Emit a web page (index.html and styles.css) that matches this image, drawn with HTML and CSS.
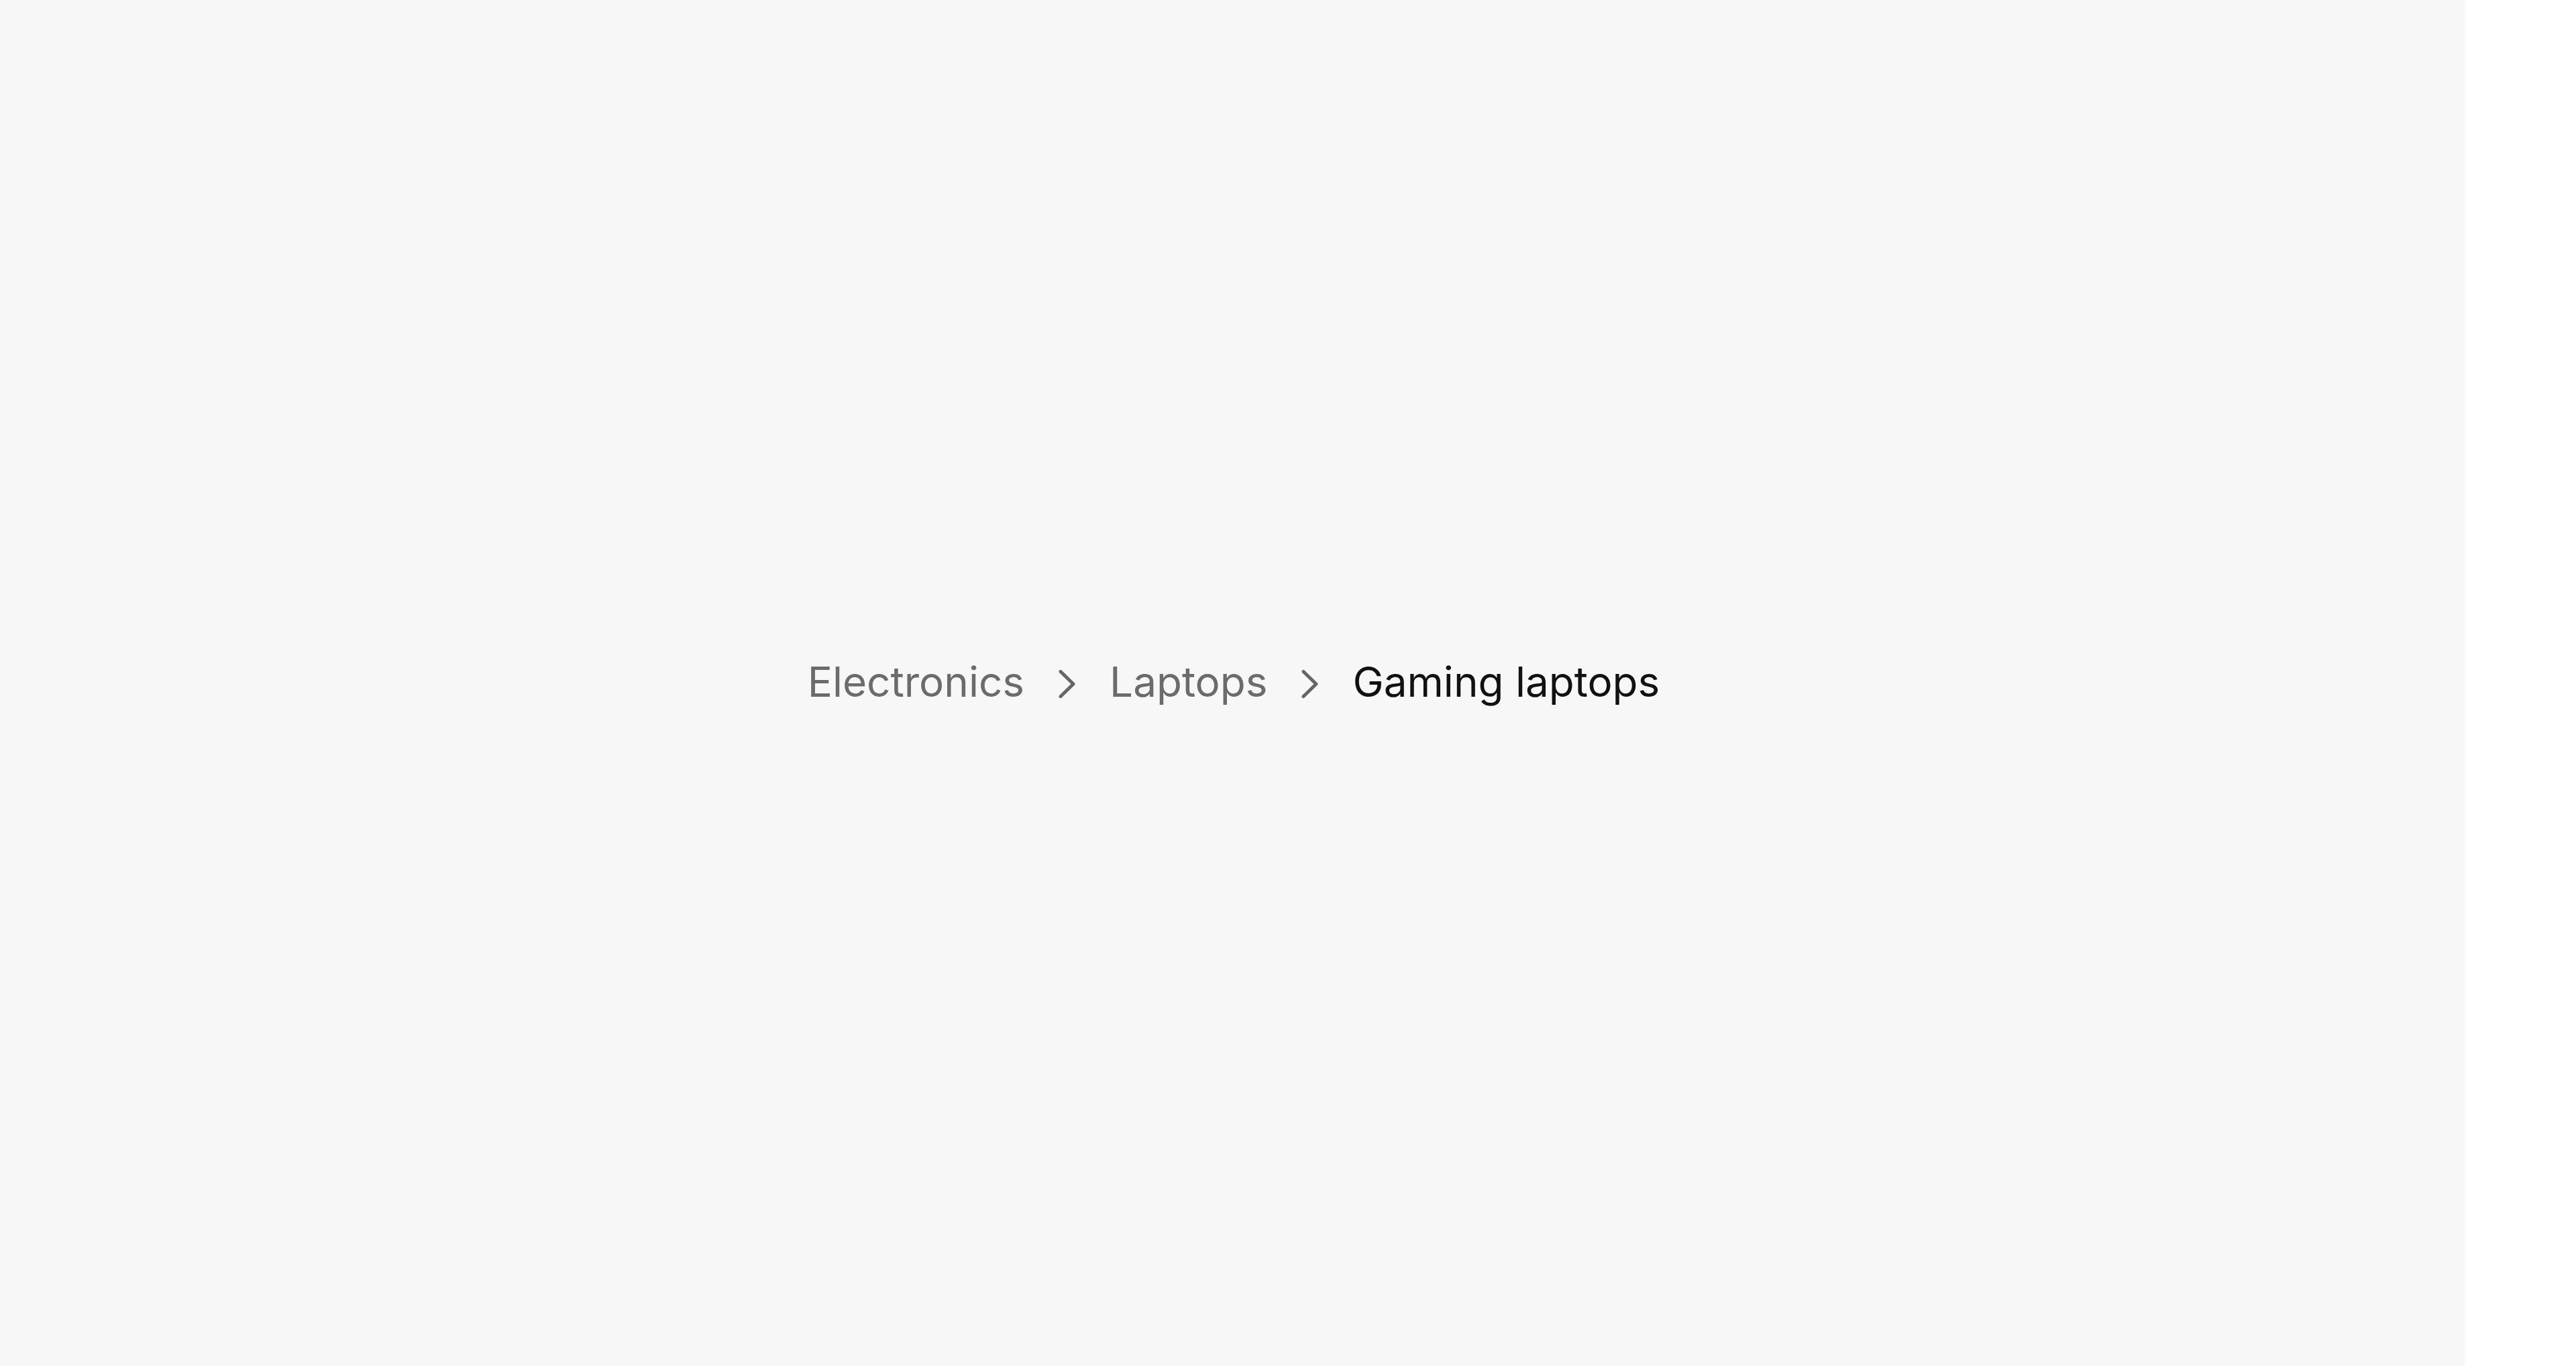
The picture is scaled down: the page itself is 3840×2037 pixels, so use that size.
FILE: index.html
```html
<!DOCTYPE html>
<html lang="en">
  <head>
    <meta charset="UTF-8" />
    <meta name="viewport" content="width=device-width, initial-scale=1.0" />
    <title>Breadcrumb</title>
    <link rel="stylesheet" href="styles.css">
  </head>
  <body>
    <main class="stage">
      <nav class="breadcrumb" aria-label="Breadcrumb">
        <ol class="crumbs">
          <li class="crumb"><a href="#">Electronics</a></li>
          <li class="sep" aria-hidden="true">
            <svg width="27" height="44" viewBox="0 0 27 44"><path d="M4 3.5 L23 22 L4 40.5" fill="none" stroke="currentColor" stroke-width="5" stroke-linecap="round" stroke-linejoin="round"/></svg>
          </li>
          <li class="crumb"><a href="#">Laptops</a></li>
          <li class="sep" aria-hidden="true">
            <svg width="27" height="44" viewBox="0 0 27 44"><path d="M4 3.5 L23 22 L4 40.5" fill="none" stroke="currentColor" stroke-width="5" stroke-linecap="round" stroke-linejoin="round"/></svg>
          </li>
          <li class="crumb current" aria-current="page">Gaming laptops</li>
        </ol>
      </nav>
    </main>
  </body>
</html>
```

FILE: styles.css
```css
html,
body {
  margin: 0;
  height: 100%;
  background-color: #fff;
}
body {
  font-family: Inter, "Liberation Sans", Arial, sans-serif;
}
.stage {
  width: 3674px;
  height: 100%;
  background-color: #f7f7f7;
  box-shadow: 1px 0 3px rgba(0, 0, 0, 0.04);
  display: flex;
  align-items: center;
  justify-content: center;
}
.breadcrumb {
  margin-left: 4px;
  margin-bottom: 2px;
}
.crumbs {
  list-style: none;
  margin: 0;
  padding: 0;
  display: flex;
  align-items: center;
  gap: 50px;
  font-size: 62px;
  line-height: 1.2;
}
.crumb a {
  color: #6b6b6b;
  text-decoration: none;
}
.crumb.current {
  color: #111;
}
.sep {
  display: flex;
  margin-top: 6px;
  color: #666;
}
```
